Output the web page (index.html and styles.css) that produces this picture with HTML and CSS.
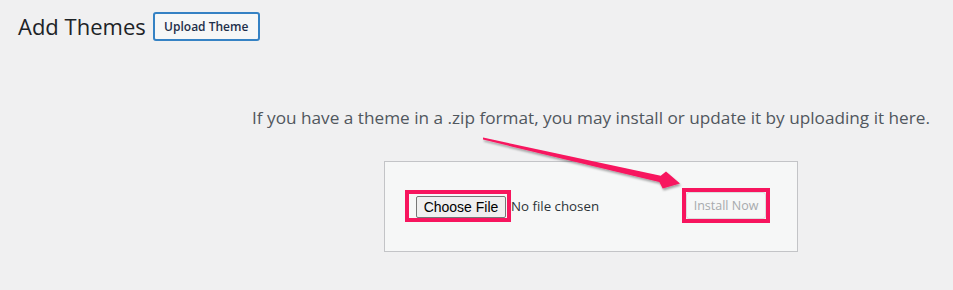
FILE: index.html
```html
<!DOCTYPE html>
<html lang="en">
<head>
<meta charset="utf-8">
<title>Add Themes</title>
<link rel="stylesheet" href="styles.css">
</head>
<body>
<div class="wrap">
  <div class="head">
    <h1 class="title">Add Themes</h1>
    <button class="title-action" type="button">Upload Theme</button>
  </div>
  <section class="upload">
    <p class="help">If you have a theme in a .zip format, you may install or update it by uploading it here.</p>
    <form class="upload-form">
      <span class="mark mark-file"><button class="file-btn" type="button">Choose File</button></span>
      <span class="file-name">No file chosen</span>
      <span class="mark mark-install"><button class="install-btn" type="button" disabled>Install Now</button></span>
    </form>
  </section>
</div>
<svg class="arrow" width="953" height="290" viewBox="0 0 953 290" aria-hidden="true">
  <defs>
    <filter id="sh" x="-10%" y="-50%" width="120%" height="200%">
      <feDropShadow dx="1" dy="2" stdDeviation="1.2" flood-color="#000" flood-opacity="0.35"/>
    </filter>
  </defs>
  <polygon filter="url(#sh)" fill="#f7155e" points="483,137.6 660.7,175.8 666,171.5 680,183.4 662.7,188.5 659.3,182 483,139.6"/>
</svg>
</body>
</html>
```
FILE: styles.css
```css
html, body {
  margin: 0;
  padding: 0;
}
body {
  position: relative;
  width: 953px;
  height: 290px;
  overflow: hidden;
  background: #f0f0f1;
  font-family: "Open Sans", "Noto Sans", sans-serif;
  color: #3c434a;
}
.wrap {
  padding: 12px 0 0 18px;
}
.head {
  display: flex;
  align-items: center;
  gap: 7px;
}
.title {
  margin: 0;
  font-size: 22px;
  font-weight: 400;
  color: #1d2327;
  line-height: 29px;
}
.title-action {
  font-family: inherit;
  font-size: 12px;
  font-weight: 600;
  color: #1e2f4a;
  background: #f6f7f7;
  border: 2px solid #3582c4;
  border-radius: 3px;
  height: 29px;
  width: 107px;
  padding: 0;
  line-height: 25px;
}
.upload {
  margin-left: 211px;
  text-align: center;
}
.help {
  margin: 0;
  padding-top: 65px;
  font-size: 17.2px;
  line-height: 24px;
  color: #50575e;
  white-space: nowrap;
}
.upload-form {
  width: 392px;
  margin: 31px auto 0;
  display: flex;
  align-items: center;
  background: #f6f7f7;
  border: 1px solid #c3c4c7;
  padding: 26px 0 28px 20px;
  height: 35px;
}
.mark {
  display: inline-flex;
  border: 4px solid #f7155e;
}
.mark-file {
  padding: 2px 1px 0 7px;
  margin-top: 1px;
}
.file-btn {
  font-family: "Liberation Sans", Arial, sans-serif;
  font-size: 14px;
  color: #000;
  background: #efefef;
  border: 1px solid #767676;
  border-radius: 2px;
  height: 22px;
  width: 90px;
  padding: 0;
}
.file-name {
  font-size: 13.3px;
  color: #2c3338;
}
.mark-install {
  margin-left: 83px;
}
.install-btn {
  font-family: inherit;
  font-size: 12.5px;
  color: #a7aaad;
  background: #f6f7f7;
  border: 1px solid #dcdcde;
  border-radius: 3px;
  height: 27px;
  width: 80px;
  padding: 0;
}
.arrow {
  position: absolute;
  left: 0;
  top: 0;
  pointer-events: none;
}
```
